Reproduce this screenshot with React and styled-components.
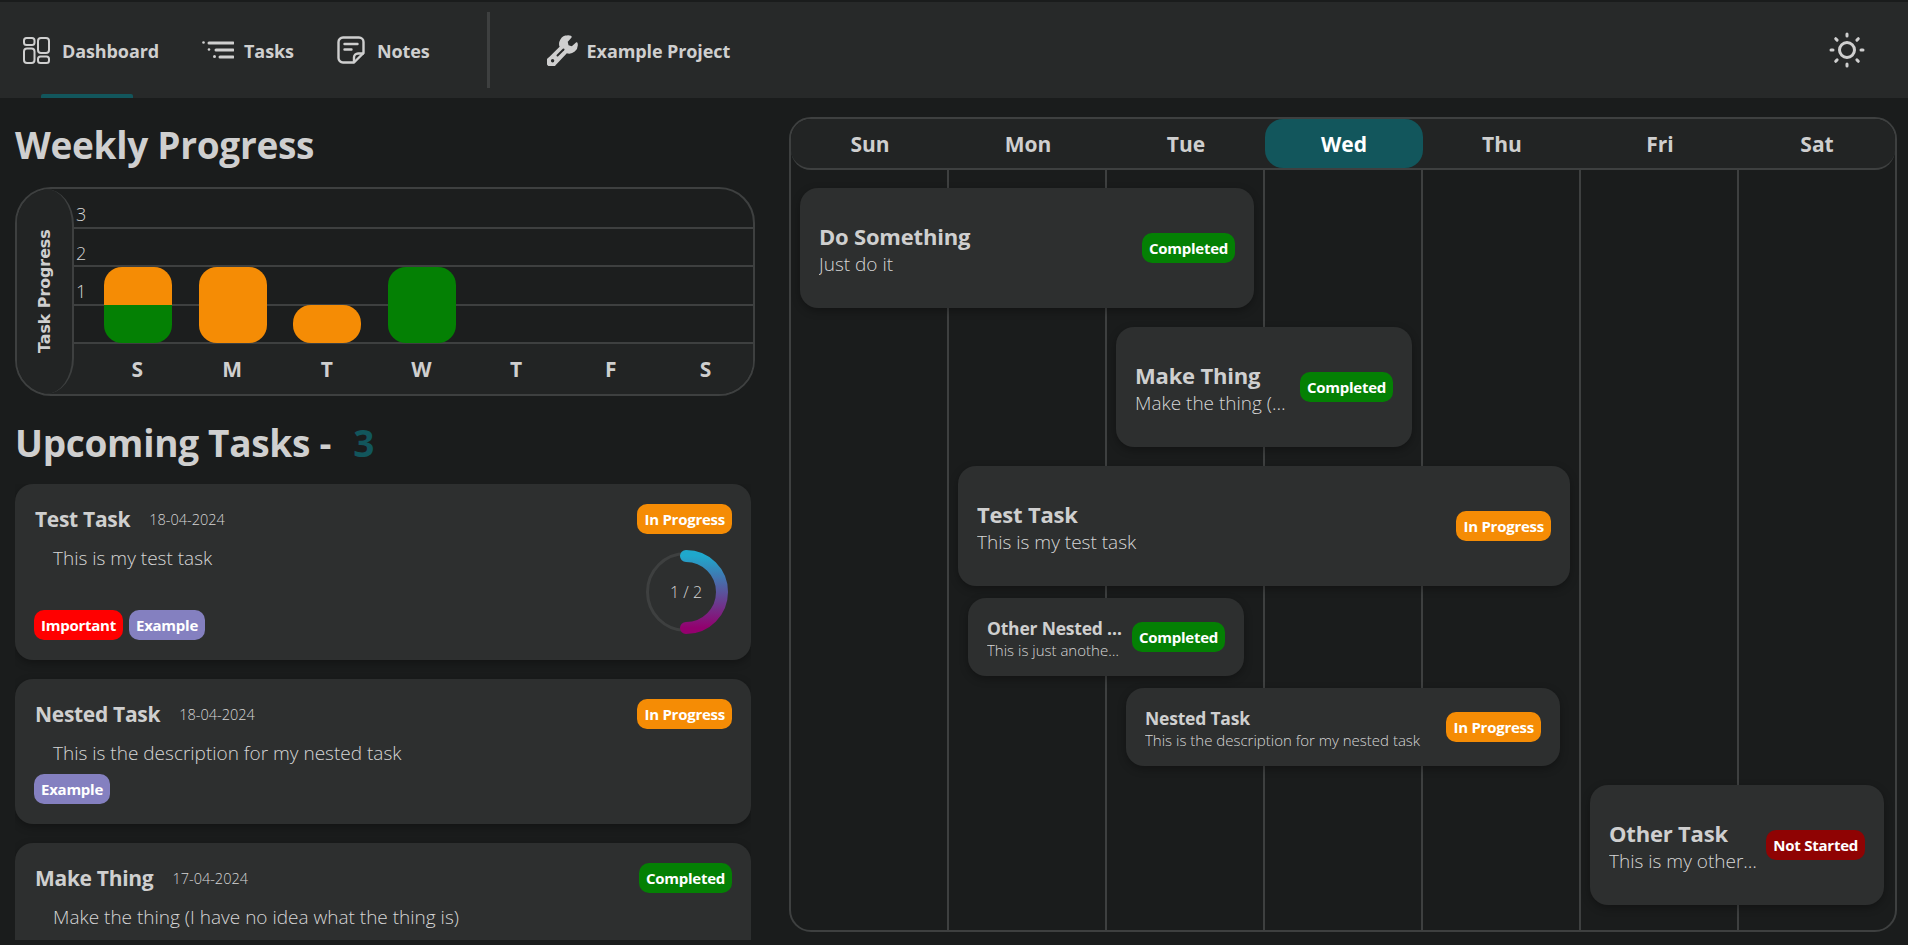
import React from 'react';
import styled, { createGlobalStyle } from 'styled-components';

const GlobalStyle = createGlobalStyle`
    html, body {
        margin: 0;
        height: 100%;
        overflow: hidden;
        background: #1a1c1c;
        color: #cfcfcf;
        font-family: "Open Sans", "Noto Sans", sans-serif;
    }
    * { box-sizing: border-box; }
`;

const Page = styled.div`
    height: 945px;
    padding-top: 2px;
    display: flex;
    flex-direction: column;
    overflow: hidden;
`;

const NavBar = styled.nav`
    height: 96px;
    flex: none;
    background: #272929;
    display: flex;
    align-items: center;
    padding: 0 43px 0 23px;
`;

const NavItem = styled.div`
    position: relative;
    height: 96px;
    padding-top: 1px;
    display: flex;
    align-items: center;
    gap: ${(p) => p.$gap || 10}px;
    margin-right: ${(p) => p.$right || 0}px;
    font-size: 18px;
    font-weight: 700;
    letter-spacing: -0.1px;
    color: #cfcfcf;
    svg { margin-top: -1px; }
    ${(p) => p.$active && `
        &::after {
            content: "";
            position: absolute;
            left: 18px;
            bottom: 0;
            width: 92px;
            height: 4px;
            border-radius: 2px 2px 0 0;
            background: #12565c;
        }
    `}
`;

const NavDivider = styled.div`
    width: 3px;
    height: 76px;
    background: #3e4040;
    margin: 0 57px 0 57px;
`;

const NavSpacer = styled.div`
    flex: 1;
`;

const Main = styled.main`
    flex: 1;
    min-height: 0;
    display: flex;
`;

const LeftColumn = styled.section`
    width: 789px;
    flex: none;
    padding: 23px 0 5px 15px;
    display: flex;
    flex-direction: column;
    min-height: 0;
`;

const Heading = styled.h1`
    margin: 0;
    height: 48px;
    font-size: 37px;
    line-height: 48px;
    font-weight: 700;
    letter-spacing: -0.3px;
    color: #cfcfcf;
`;

const Count = styled.span`
    color: #12565c;
    margin-left: 13px;
`;

const Chart = styled.div`
    width: 740px;
    height: 209px;
    margin: 18px 0 23px;
    border: 2px solid #3e4040;
    border-radius: 36px;
    background: #1c1e1e;
    display: flex;
    overflow: hidden;
`;

const AxisTitle = styled.div`
    position: relative;
    z-index: 1;
    width: 57px;
    flex: none;
    background: #222424;
    border-left: 2px solid #3e4040;
    border-radius: 28px 0 0 28px / 36px 0 0 36px;
    display: flex;
    align-items: center;
    justify-content: center;
    writing-mode: vertical-rl;
    transform: rotate(180deg);
    font-family: "DejaVu Sans", sans-serif;
    font-size: 15.8px;
    font-weight: 700;
    color: #cfcfcf;
`;

const Plot = styled.div`
    flex: 1;
    position: relative;
    display: flex;
    flex-direction: column;
    padding-top: 1px;
`;

const PlotRow = styled.div`
    height: 38.5px;
    flex: none;
    border-bottom: 2px solid #3e4040;
    padding: 13px 0 0 2px;
    font-size: 18px;
    line-height: 22px;
    font-weight: 300;
    color: #d6d6d6;
`;

const DayLetters = styled.div`
    flex: 1;
    margin-left: -24px;
    background: #222424;
    padding-left: 40px;
    display: grid;
    grid-template-columns: repeat(7, 94.7px);
    align-items: center;
    text-align: center;
    font-size: 21px;
    font-weight: 700;
    color: #cfcfcf;
`;

const Bars = styled.div`
    position: absolute;
    left: 30px;
    top: 78px;
    display: flex;
    align-items: flex-end;
    gap: 26.7px;
    height: 76px;
`;

const Bar = styled.div`
    width: 68px;
    border-radius: 18px;
    overflow: hidden;
    display: flex;
    flex-direction: column;
`;

const BarPart = styled.div`
    height: 38px;
    background: ${(p) => p.$color};
`;

const TaskList = styled.div`
    flex: 1;
    min-height: 0;
    overflow: hidden;
    width: 736px;
    display: flex;
    flex-direction: column;
    gap: 19px;
    margin-top: 17px;
`;

const TaskCard = styled.article`
    flex: none;
    position: relative;
    background: #2d2f2f;
    border-radius: 18px;
    box-shadow: 0 3px 8px rgba(0, 0, 0, 0.3);
    padding: 20px 19px 20px;
`;

const TaskHeader = styled.div`
    display: flex;
    align-items: center;
    height: 30px;
`;

const TaskTitle = styled.div`
    margin-left: 1px;
    font-size: 21px;
    font-weight: 700;
    letter-spacing: -0.3px;
    color: #cfcfcf;
`;

const TaskDate = styled.div`
    margin-left: 19px;
    font-size: 14.5px;
    font-weight: 300;
    color: #d6d6d6;
`;

const TaskHeaderSpacer = styled.div`
    flex: 1;
`;

const TaskBody = styled.div`
    margin-top: 11px;
    padding-left: 19px;
    height: ${(p) => p.$height}px;
    font-size: 19px;
    line-height: 26px;
    font-weight: 300;
    color: #d6d6d6;
`;

const TagRow = styled.div`
    display: flex;
    gap: 6px;
`;

const Pill = styled.div`
    flex: none;
    height: 30px;
    padding: 0 7px;
    border-radius: 10px;
    display: inline-flex;
    align-items: center;
    background: ${(p) => p.$color};
    color: #fff;
    font-size: 15px;
    font-weight: 700;
    letter-spacing: -0.25px;
    white-space: nowrap;
`;

const RingBox = styled.div`
    position: absolute;
    right: 22px;
    top: 65px;
    width: 86px;
    height: 86px;
    display: flex;
    align-items: center;
    justify-content: center;
`;

const RingSvg = styled.svg`
    position: absolute;
    inset: 0;
`;

const RingLabel = styled.span`
    position: relative;
    font-size: 16px;
    font-weight: 300;
    color: #d6d6d6;
`;

const Calendar = styled.section`
    width: 1108px;
    height: 815px;
    margin-top: 19px;
    position: relative;
    border: 2px solid #3e4040;
    border-radius: 22px;
    display: flex;
    flex-direction: column;
    overflow: hidden;
`;

const WEEK_COLUMNS = '158px repeat(5, 158px) 1fr';

const WeekHeader = styled.div`
    height: 51px;
    flex: none;
    display: grid;
    grid-template-columns: ${WEEK_COLUMNS};
    background: #222424;
    border-bottom: 2px solid #3e4040;
    border-radius: 0 0 20px 20px;
`;

const WeekDay = styled.div`
    display: flex;
    align-items: center;
    justify-content: center;
    padding-top: 1px;
    border-radius: 18px;
    font-size: 21px;
    font-weight: 700;
    color: ${(p) => (p.$today ? '#fff' : '#cfcfcf')};
    background: ${(p) => (p.$today ? '#12565c' : 'transparent')};
`;

const CalendarBody = styled.div`
    flex: 1;
    position: relative;
    min-height: 0;
`;

const ColumnLines = styled.div`
    position: absolute;
    inset: 0;
    display: grid;
    grid-template-columns: ${WEEK_COLUMNS};
`;

const ColumnLine = styled.div`
    border-right: 2px solid #3e4040;
    &:last-child { border-right: none; }
`;

const EventGrid = styled.div`
    position: relative;
    margin-top: -1px;
    display: grid;
    grid-template-columns: ${WEEK_COLUMNS};
`;

const EventCard = styled.article`
    grid-column: ${(p) => p.$start} / span ${(p) => p.$span};
    grid-row: ${(p) => p.$row};
    min-width: 0;
    height: ${(p) => (p.$compact ? 78 : 120)}px;
    margin: ${(p) => (p.$compact ? '12px 21px 0 19px' : '19px 11px 0 9px')};
    padding: 0 19px;
    background: #2d2f2f;
    border-radius: 18px;
    box-shadow: 0 3px 8px rgba(0, 0, 0, 0.3);
    display: flex;
    align-items: center;
    gap: 9px;
`;

const EventText = styled.div`
    flex: 1;
    min-width: 0;
    padding-top: 2px;
    padding-right: ${(p) => p.$inset || 0}px;
`;

const EventTitle = styled.div`
    font-size: ${(p) => (p.$compact ? 17.5 : 22)}px;
    line-height: ${(p) => (p.$compact ? 24 : 30)}px;
    font-weight: 700;
    letter-spacing: -0.2px;
    color: #cfcfcf;
    white-space: nowrap;
    overflow: hidden;
    text-overflow: ellipsis;
`;

const EventDesc = styled.div`
    font-size: ${(p) => (p.$compact ? 15 : 19)}px;
    line-height: ${(p) => (p.$compact ? 20 : 26)}px;
    font-weight: 300;
    color: #d6d6d6;
    white-space: nowrap;
    overflow: hidden;
    text-overflow: ellipsis;
`;

const ORANGE = '#f58c05';
const GREEN = '#048004';
const RED = '#8f0303';
const TAG_RED = '#ff0000';
const TAG_PURPLE = '#8480c0';

const DashboardIcon = () => (
    <svg width="27" height="27" viewBox="0 0 27 27" fill="none" stroke="#cfcfcf" strokeWidth="2">
        <rect x="1" y="1" width="10.5" height="7" rx="2.5" />
        <rect x="1" y="11.5" width="10.5" height="14.5" rx="3" />
        <rect x="15" y="1" width="11" height="15" rx="3" />
        <rect x="15" y="19.5" width="11" height="6.5" rx="2.5" />
    </svg>
);

const TasksIcon = () => (
    <svg width="32" height="18" viewBox="0 0 32 18" fill="none" stroke="#cfcfcf" strokeLinecap="round">
        <circle cx="1.5" cy="1.5" r="1.3" fill="#cfcfcf" stroke="none" />
        <circle cx="7" cy="8.5" r="1.3" fill="#cfcfcf" stroke="none" />
        <circle cx="12.5" cy="15.5" r="1.5" fill="#cfcfcf" stroke="none" />
        <path d="M7 2h24M14 9h17M18 16h13" strokeWidth="3" />
    </svg>
);

const NotesIcon = () => (
    <svg width="28" height="28" viewBox="0 0 28 28" fill="none" stroke="#cfcfcf" strokeWidth="2.4" strokeLinecap="round" strokeLinejoin="round">
        <path d="M17 26.5H6a4.5 4.5 0 0 1-4.5-4.5V6A4.5 4.5 0 0 1 6 1.5h16A4.5 4.5 0 0 1 26.5 6v11L17 26.5Z" />
        <path d="M17 26v-4.5a4 4 0 0 1 4-4h5" />
        <path d="M7.5 8h13M7.5 13.5h7" />
    </svg>
);

const WrenchIcon = () => (
    <svg width="31" height="31" viewBox="0 0 31 31" fill="none" stroke="#cfcfcf" strokeLinecap="round" strokeLinejoin="round">
        <path d="M20.5 1.5a7.5 7.5 0 0 0-6.6 10.6L2.8 23a4.2 4.2 0 1 0 5.6 5.6L19.5 17a7.5 7.5 0 0 0 10-8.5l-4.5 4-4.5-1.5-1-4.5 4-4.6a7 7 0 0 0-3-.4Z" strokeWidth="2.3" fill="#cfcfcf" />
        <circle cx="5.6" cy="25.8" r="1.7" fill="#272929" stroke="none" />
        <path d="M10.5 20.5l6-6" stroke="#272929" strokeWidth="2" />
    </svg>
);

const SunIcon = () => (
    <svg width="36" height="36" viewBox="0 0 36 36" fill="none" stroke="#cfcfcf" strokeLinecap="round">
        <circle cx="18" cy="18" r="7.5" strokeWidth="3" />
        <path d="M18 2v2M18 32v2M2 18h2M32 18h2M6.7 6.7l1.4 1.4M27.9 27.9l1.4 1.4M6.7 29.3l1.4-1.4M27.9 8.1l1.4-1.4" strokeWidth="3" />
    </svg>
);

const ProgressRing = () => (
    <RingBox>
        <RingSvg width="86" height="86" viewBox="0 0 86 86" fill="none">
            <defs>
                <linearGradient id="ringGradient" x1="0" y1="0" x2="0" y2="1">
                    <stop offset="0" stopColor="#1fa8cc" />
                    <stop offset="1" stopColor="#93006e" />
                </linearGradient>
            </defs>
            <circle cx="43" cy="43" r="38.5" stroke="#3e4040" strokeWidth="3" />
            <path d="M43 7a36 36 0 0 1 0 72" stroke="url(#ringGradient)" strokeWidth="12" strokeLinecap="round" />
        </RingSvg>
        <RingLabel>1 / 2</RingLabel>
    </RingBox>
);

const days = ['Sun', 'Mon', 'Tue', 'Wed', 'Thu', 'Fri', 'Sat'];
const letters = ['S', 'M', 'T', 'W', 'T', 'F', 'S'];
const barData = [[ORANGE, GREEN], [ORANGE, ORANGE], [ORANGE], [GREEN, GREEN]];

const events = [
    { title: 'Do Something', desc: 'Just do it', status: 'Completed', color: GREEN, start: 1, span: 3 },
    { title: 'Make Thing', desc: 'Make the thing (I have no idea what the thing is)', status: 'Completed', color: GREEN, start: 3, span: 2, inset: 3 },
    { title: 'Test Task', desc: 'This is my test task', status: 'In Progress', color: ORANGE, start: 2, span: 4 },
    { title: 'Other Nested Task', desc: 'This is just another nested task', status: 'Completed', color: GREEN, start: 2, span: 2, compact: true },
    { title: 'Nested Task', desc: 'This is the description for my nested task', status: 'In Progress', color: ORANGE, start: 3, span: 3, compact: true },
    { title: 'Other Task', desc: 'This is my other task', status: 'Not Started', color: RED, start: 6, span: 2 },
];

const App = () => {
    return (
        <Page>
            <GlobalStyle />
            <NavBar>
                <NavItem $active $gap={12} $right={43}><DashboardIcon />Dashboard</NavItem>
                <NavItem $right={43}><TasksIcon />Tasks</NavItem>
                <NavItem $gap={12}><NotesIcon />Notes</NavItem>
                <NavDivider />
                <NavItem $gap={9}><WrenchIcon />Example Project</NavItem>
                <NavSpacer />
                <SunIcon />
            </NavBar>
            <Main>
                <LeftColumn>
                    <Heading>Weekly Progress</Heading>
                    <Chart>
                        <AxisTitle>Task Progress</AxisTitle>
                        <Plot>
                            <PlotRow>3</PlotRow>
                            <PlotRow>2</PlotRow>
                            <PlotRow>1</PlotRow>
                            <PlotRow />
                            <DayLetters>
                                {letters.map((l, i) => <span key={i}>{l}</span>)}
                            </DayLetters>
                            <Bars>
                                {barData.map((parts, i) => (
                                    <Bar key={i}>
                                        {parts.map((c, j) => <BarPart key={j} $color={c} />)}
                                    </Bar>
                                ))}
                            </Bars>
                        </Plot>
                    </Chart>
                    <Heading>Upcoming Tasks - <Count>3</Count></Heading>
                    <TaskList>
                        <TaskCard>
                            <TaskHeader>
                                <TaskTitle>Test Task</TaskTitle>
                                <TaskDate>18-04-2024</TaskDate>
                                <TaskHeaderSpacer />
                                <Pill $color={ORANGE}>In Progress</Pill>
                            </TaskHeader>
                            <TaskBody $height={65}>This is my test task</TaskBody>
                            <TagRow>
                                <Pill $color={TAG_RED}>Important</Pill>
                                <Pill $color={TAG_PURPLE}>Example</Pill>
                            </TagRow>
                            <ProgressRing />
                        </TaskCard>
                        <TaskCard>
                            <TaskHeader>
                                <TaskTitle>Nested Task</TaskTitle>
                                <TaskDate>18-04-2024</TaskDate>
                                <TaskHeaderSpacer />
                                <Pill $color={ORANGE}>In Progress</Pill>
                            </TaskHeader>
                            <TaskBody $height={34}>This is the description for my nested task</TaskBody>
                            <TagRow>
                                <Pill $color={TAG_PURPLE}>Example</Pill>
                            </TagRow>
                        </TaskCard>
                        <TaskCard>
                            <TaskHeader>
                                <TaskTitle>Make Thing</TaskTitle>
                                <TaskDate>17-04-2024</TaskDate>
                                <TaskHeaderSpacer />
                                <Pill $color={GREEN}>Completed</Pill>
                            </TaskHeader>
                            <TaskBody $height={34}>Make the thing (I have no idea what the thing is)</TaskBody>
                        </TaskCard>
                    </TaskList>
                </LeftColumn>
                <Calendar>
                    <WeekHeader>
                        {days.map((d) => <WeekDay key={d} $today={d === 'Wed'}>{d}</WeekDay>)}
                    </WeekHeader>
                    <CalendarBody>
                        <ColumnLines>
                            {days.map((d) => <ColumnLine key={d} />)}
                        </ColumnLines>
                        <EventGrid>
                            {events.map((e, i) => (
                                <EventCard key={e.title} $row={i + 1} $start={e.start} $span={e.span} $compact={e.compact}>
                                    <EventText $inset={e.inset}>
                                        <EventTitle $compact={e.compact}>{e.title}</EventTitle>
                                        <EventDesc $compact={e.compact}>{e.desc}</EventDesc>
                                    </EventText>
                                    <Pill $color={e.color}>{e.status}</Pill>
                                </EventCard>
                            ))}
                        </EventGrid>
                    </CalendarBody>
                </Calendar>
            </Main>
        </Page>
    );
};

export default App;
